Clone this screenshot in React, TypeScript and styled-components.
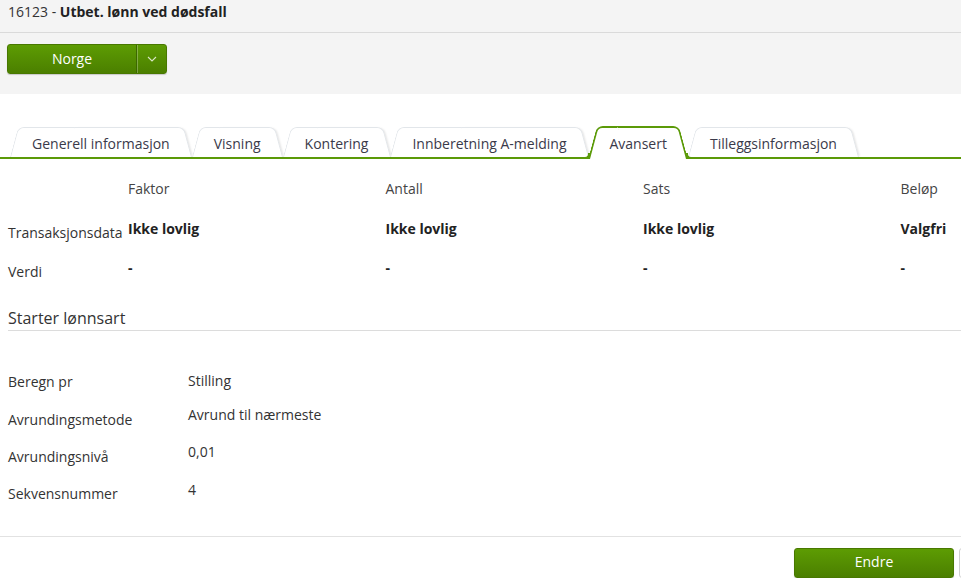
import React from 'react';
import styled, { createGlobalStyle, css } from 'styled-components';

const GREEN = '#5b9a08';

const GlobalStyle = createGlobalStyle`
  html, body { margin: 0; padding: 0; background: #fff; overflow: hidden; }
  body {
    font-family: "Open Sans", "Liberation Sans", Arial, sans-serif;
    font-size: 14px;
    color: #333;
  }
  * { box-sizing: border-box; }
`;

const Page = styled.div`
  width: 1124px;
`;

const Header = styled.header`
  background: #f4f4f4;
  height: 94px;
`;

const TitleBar = styled.div`
  height: 33px;
  padding: 2px 8px 0;
  line-height: 20px;
  border-bottom: 1px solid #dadada;
  color: #333;
`;

const TitleStrong = styled.strong`
  font-weight: 700;
  color: #222;
`;

const ButtonRow = styled.div`
  padding: 11px 7px 0;
`;

const greenButton = css`
  background: linear-gradient(to bottom, #5d9c03 0%, #4b7f00 100%);
  border: 1px solid #487800;
  border-radius: 3px;
  box-shadow: 0 1px 1px rgba(0, 0, 0, 0.18);
  color: #fff;
`;

const SplitButton = styled.div`
  ${greenButton};
  display: inline-flex;
  height: 30px;
  width: 160px;
  overflow: hidden;
`;

const SplitMain = styled.div`
  width: 129px;
  display: flex;
  align-items: center;
  justify-content: center;
  padding-bottom: 2px;
  font-size: 14px;
  border-right: 1px solid #3d6800;
`;

const SplitArrow = styled.div`
  flex: 1;
  display: flex;
  align-items: center;
  justify-content: center;
  border-left: 1px solid rgba(255, 255, 255, 0.28);
`;

const TabBar = styled.nav`
  display: flex;
  align-items: flex-end;
  margin-top: 32px;
  padding-left: 10px;
  border-bottom: 2px solid ${GREEN};
`;

const Tab = styled.div<{ $active?: boolean }>`
  position: relative;
  z-index: ${p => (p.$active ? 2 : 0)};
  height: ${p => (p.$active ? '33px' : '30px')};
  margin-bottom: ${p => (p.$active ? '-2px' : '0')};
  padding: ${p => (p.$active ? '8px 21px 0' : '7px 22px 0')};
  line-height: 20px;
  font-size: 14px;
  color: #3a3a4a;
  white-space: nowrap;

  &::before,
  &::after {
    content: '';
    position: absolute;
    top: 0;
    bottom: 0;
    width: 60%;
    z-index: -1;
    background: #fff;
    transform-origin: bottom;
    border: ${p => (p.$active ? `2px solid ${GREEN}` : '1px solid #e2e6ea')};
    border-bottom: none;
  }
  &::before {
    left: 0;
    border-right: none;
    border-top-left-radius: 6px;
    transform: skewX(-15deg);
  }
  &::after {
    right: 0;
    border-left: none;
    border-top-right-radius: 6px;
    transform: skewX(15deg);
    box-shadow: ${p => (p.$active ? 'none' : '2px 0 2px -1px rgba(0,0,0,0.10)')};
  }
`;

const Flare = styled.span<{ $side: 'left' | 'right' }>`
  position: absolute;
  bottom: 0;
  width: 6px;
  height: 6px;
  border-bottom: 2px solid ${GREEN};
  ${p =>
    p.$side === 'left'
      ? css`
          left: -4px;
          border-right: 2px solid ${GREEN};
          border-bottom-right-radius: 5px;
        `
      : css`
          right: -4px;
          border-left: 2px solid ${GREEN};
          border-bottom-left-radius: 5px;
        `}
`;

const DataGrid = styled.div`
  display: grid;
  grid-template-columns: 120px repeat(4, 257.5px);
  grid-template-rows: 26px 24px 24px;
  row-gap: 15px;
  padding: 19px 8px 0;
  line-height: 20px;
`;

const ColHead = styled.div`
  align-self: start;
  color: #444;
  padding-top: 1px;
`;

const RowLabel = styled.div`
  align-self: end;
  color: #333;
`;

const Value = styled.div`
  align-self: start;
  font-weight: 700;
  color: #222;
`;

const SectionHeading = styled.h2`
  margin: 25px 0 0 8px;
  padding-bottom: 1px;
  font-size: 16px;
  line-height: 22px;
  font-weight: 400;
  color: #333;
  border-bottom: 1px solid #dcdcdc;
`;

const DetailGrid = styled.div`
  display: grid;
  grid-template-columns: 180px 1fr;
  grid-template-rows: 21px 25px 25px 24px;
  row-gap: 12.5px;
  margin-top: 40px;
  padding: 0 8px;
  line-height: 20px;
`;

const DetailLabel = styled.div`
  align-self: end;
  color: #333;
`;

const DetailValue = styled.div`
  align-self: start;
  color: #333;
`;

const Footer = styled.footer`
  display: flex;
  justify-content: flex-end;
  gap: 5px;
  margin-top: 32px;
  padding: 11px 5px 0;
  border-top: 1px solid #e2e2e2;
`;

const Button = styled.button<{ $primary?: boolean }>`
  width: 160px;
  height: 30px;
  padding: 0 0 2px;
  font-family: inherit;
  font-size: 14px;
  cursor: pointer;
  ${p =>
    p.$primary
      ? greenButton
      : css`
          background: #fff;
          border: 1px solid #cfcfcf;
          border-radius: 3px;
          color: #333;
        `}
`;

const tabs = [
  'Generell informasjon',
  'Visning',
  'Kontering',
  'Innberetning A-melding',
  'Avansert',
  'Tilleggsinformasjon',
];

const columns = [
  { head: 'Faktor', trans: 'Ikke lovlig' },
  { head: 'Antall', trans: 'Ikke lovlig' },
  { head: 'Sats', trans: 'Ikke lovlig' },
  { head: 'Beløp', trans: 'Valgfri' },
];

const details = [
  ['Beregn pr', 'Stilling'],
  ['Avrundingsmetode', 'Avrund til nærmeste'],
  ['Avrundingsnivå', '0,01'],
  ['Sekvensnummer', '4'],
];

export default function App() {
  return (
    <Page>
      <GlobalStyle />
      <Header>
        <TitleBar>
          16123 - <TitleStrong>Utbet. lønn ved dødsfall</TitleStrong>
        </TitleBar>
        <ButtonRow>
          <SplitButton>
            <SplitMain>Norge</SplitMain>
            <SplitArrow>
              <svg width="10" height="6" viewBox="0 0 10 6" fill="none">
                <polyline points="1,1 5,5 9,1" stroke="#d8e6c4" strokeWidth="1.1" />
              </svg>
            </SplitArrow>
          </SplitButton>
        </ButtonRow>
      </Header>

      <TabBar>
        {tabs.map(t => (
          <Tab key={t} $active={t === 'Avansert'}>
            {t}
            {t === 'Avansert' && (
              <>
                <Flare $side="left" />
                <Flare $side="right" />
              </>
            )}
          </Tab>
        ))}
      </TabBar>

      <DataGrid>
        <div />
        {columns.map(c => (
          <ColHead key={c.head}>{c.head}</ColHead>
        ))}
        <RowLabel>Transaksjonsdata</RowLabel>
        {columns.map(c => (
          <Value key={c.head}>{c.trans}</Value>
        ))}
        <RowLabel>Verdi</RowLabel>
        {columns.map(c => (
          <Value key={c.head}>-</Value>
        ))}
      </DataGrid>

      <SectionHeading>Starter lønnsart</SectionHeading>

      <DetailGrid>
        {details.map(([l, v]) => (
          <React.Fragment key={l}>
            <DetailLabel>{l}</DetailLabel>
            <DetailValue>{v}</DetailValue>
          </React.Fragment>
        ))}
      </DetailGrid>

      <Footer>
        <Button $primary>Endre</Button>
        <Button aria-label="Avbryt" />
      </Footer>
    </Page>
  );
}
